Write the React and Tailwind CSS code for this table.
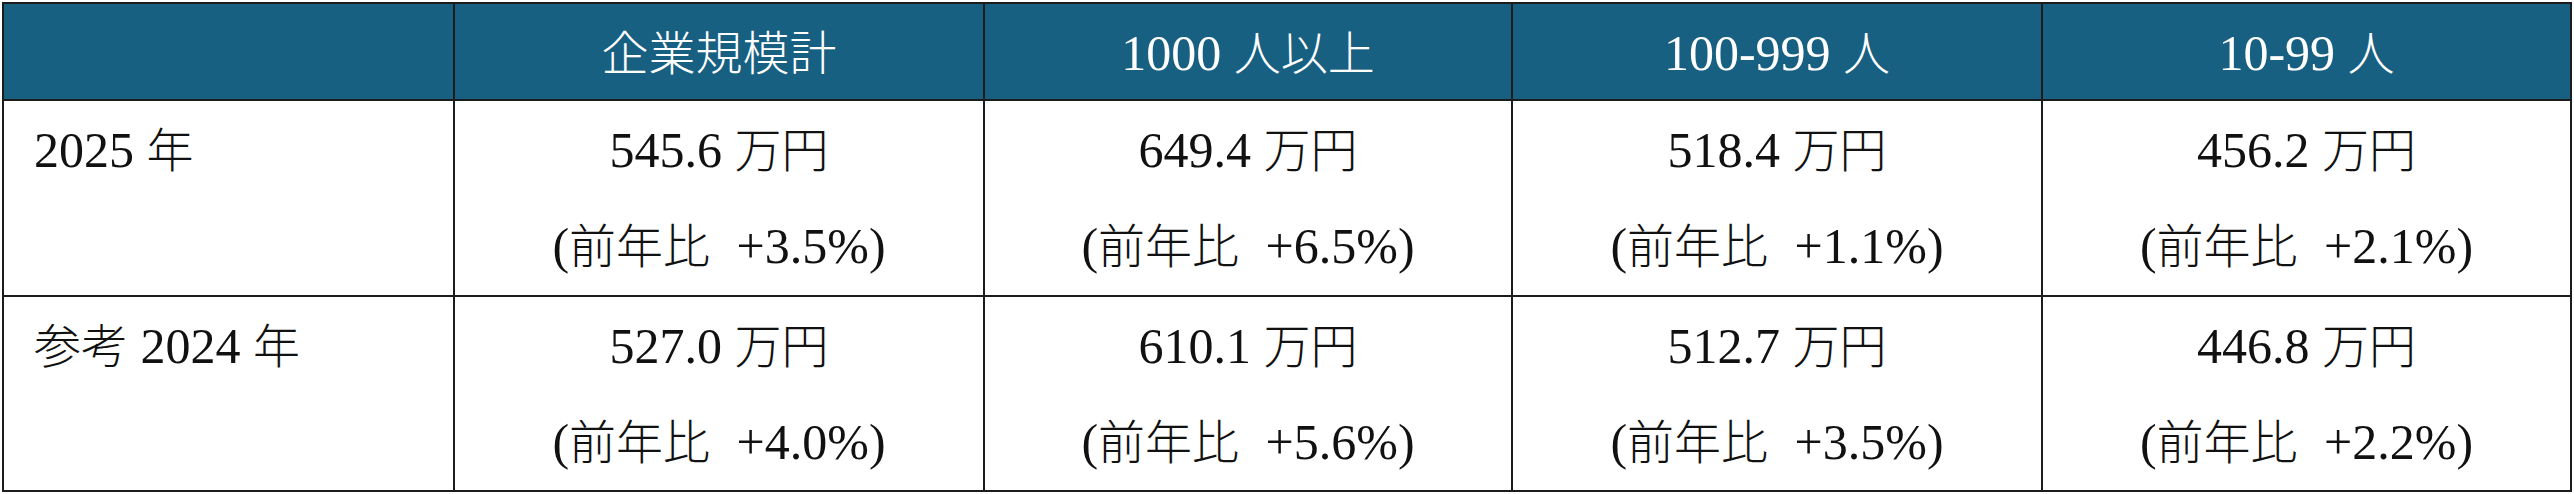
import { Fragment } from "react";

const headers = ["企業規模計", "1000 人以上", "100-999 人", "10-99 人"];

const rows = [
  {
    label: "2025 年",
    cells: [
      ["545.6 万円", "+3.5%"],
      ["649.4 万円", "+6.5%"],
      ["518.4 万円", "+1.1%"],
      ["456.2 万円", "+2.1%"],
    ],
  },
  {
    label: "参考 2024 年",
    cells: [
      ["527.0 万円", "+4.0%"],
      ["610.1 万円", "+5.6%"],
      ["512.7 万円", "+3.5%"],
      ["446.8 万円", "+2.2%"],
    ],
  },
];

const font = {
  fontFamily: '"Liberation Serif", "Noto Sans CJK JP", serif',
};

// latin digits are set a bit larger than the kanji, like the source
const Txt = ({ s }) =>
  s.split(/([\u3000-\u9fff\uff00-\uffef]+)/).map((part, i) =>
    /[\u3000-\u9fff\uff00-\uffef]/.test(part) ? (
      <span key={i} className="text-[47px] font-light">
        {part}
      </span>
    ) : (
      <Fragment key={i}>{part}</Fragment>
    )
  );

export default function App() {
  return (
    <div className="w-[2574px] h-[494px] bg-white p-[2px]" style={font}>
      <div className="grid w-[2570px] grid-cols-[449px_528px_526px_528px_527px] grid-rows-[95px_194px_193px] gap-[2px] bg-[#1c1c1c] p-[2px] text-[50px]">
        <div className="bg-[#186081]" />
        {headers.map((h) => (
          <div
            key={h}
            className="bg-[#186081] pt-[4px] text-center leading-[91px] text-white"
          >
            <Txt s={h} />
          </div>
        ))}

        {rows.map((row) => (
          <Fragment key={row.label}>
            <div className="bg-white pl-[30px] pt-[2px] leading-[95px] text-[#111]">
              <Txt s={row.label} />
            </div>
            {row.cells.map(([value, pct], i) => (
              <div
                key={i}
                className="flex flex-col items-center bg-white pt-[2px] leading-[95px] text-[#111]"
              >
                <span>
                  <Txt s={value} />
                </span>
                <span className="[word-spacing:14px]">
                  <Txt s={`(前年比 ${pct})`} />
                </span>
              </div>
            ))}
          </Fragment>
        ))}
      </div>
    </div>
  );
}
